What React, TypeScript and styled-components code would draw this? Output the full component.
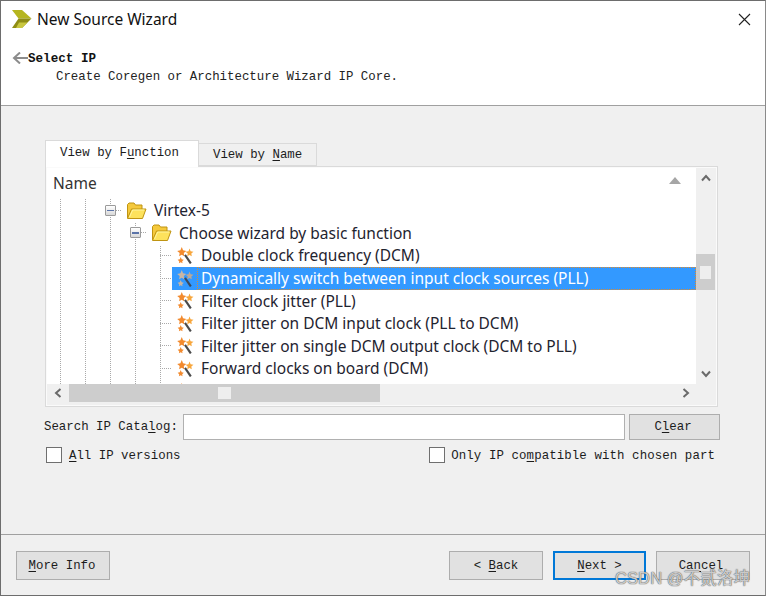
import React from "react";
import styled, { createGlobalStyle } from "styled-components";

const Global = createGlobalStyle`
  html, body { margin: 0; padding: 0; background: #f0f0f0; }
  * { box-sizing: border-box; }
`;

const mono = `"Liberation Mono", "DejaVu Sans Mono", monospace`;
const sans = `"Noto Sans", "Open Sans", sans-serif`;

const Window = styled.div`
  position: relative;
  width: 766px;
  height: 596px;
  display: flex;
  flex-direction: column;
  background: #f0f0f0;
  border: 1px solid #6d6d6d;
  border-right-color: #8a8a8a;
  overflow: hidden;
  font-family: ${mono};
  font-size: 12.4px;
  color: #1c1c1c;
`;

const Header = styled.header`
  height: 105px;
  flex: none;
  background: #fff;
  border-bottom: 1px solid #a0a0a0;
`;

const TitleBar = styled.div`
  height: 37px;
  display: flex;
  align-items: center;
  padding: 0 14px 1px 10px;
  gap: 5px;
`;

const Title = styled.div`
  flex: 1;
  font-family: ${sans};
  font-size: 15.5px;
  color: #111;
`;

const HeaderBody = styled.div`
  display: flex;
  padding: 14px 0 0 11px;
`;

const HeaderText = styled.div`
  display: flex;
  flex-direction: column;
  line-height: 18px;
  margin-top: -2px;
`;

const Heading = styled.div`
  font-weight: 700;
  font-size: 12.6px;
  color: #111;
`;

const SubHeading = styled.div`
  padding-left: 28px;
  color: #222;
`;

const Body = styled.main`
  flex: 1;
  padding: 34px 45px 0 43px;
  display: flex;
  flex-direction: column;
`;

const TabRow = styled.div`
  display: flex;
  align-items: flex-end;
  height: 26px;
  margin-left: 1px;
  position: relative;
  z-index: 1;
`;

const Tab = styled.div<{ $active?: boolean }>`
  height: ${(p) => (p.$active ? "27px" : "23px")};
  width: ${(p) => (p.$active ? "154px" : "118px")};
  margin-bottom: ${(p) => (p.$active ? "-1px" : "0")};
  padding: ${(p) => (p.$active ? "5px 0 0 14px" : "4px 0 0 14px")};
  background: ${(p) => (p.$active ? "#fff" : "#f0f0f0")};
  border: 1px solid #dadada;
  border-bottom: ${(p) => (p.$active ? "none" : "1px solid #dadada")};
  border-left-width: ${(p) => (p.$active ? "1px" : "0")};
  white-space: nowrap;
`;

const Panel = styled.section`
  margin-left: 1px;
  width: 673px;
  height: 241px;
  border: 1px solid #dadada;
  box-shadow: inset 0 0 0 1px #fafafa;
  padding: 1px 2px 2px 1px;
  display: grid;
  grid-template-columns: 1fr 19px;
  grid-template-rows: 1fr 20px;
`;

const TreePane = styled.div`
  background: #fff;
  overflow: hidden;
  font-family: ${sans};
  font-size: 15.5px;
  color: #1f2430;
`;

const ColumnHeader = styled.div`
  height: 31px;
  display: flex;
  align-items: flex-start;
  justify-content: space-between;
  padding: 4px 15px 0 6px;
  line-height: 22px;
  color: #333;
`;

const dots = (x: number, y: number) =>
  `repeating-linear-gradient(to bottom, #a9a9a9 0 1px, transparent 1px 2px) ${x}px ${y}px / 1px 100% no-repeat`;

const Tree = styled.div`
  height: 187px;
  overflow: hidden;
  background: ${dots(13, 0)}, ${dots(38, 0)}, ${dots(63, 0)}, ${dots(88, 24)}, ${dots(113, 47)};
`;

const Row = styled.div<{ $indent: number }>`
  height: 22.6px;
  display: flex;
  align-items: center;
  padding-left: ${(p) => p.$indent}px;
  white-space: nowrap;
`;

const Dash = styled.span<{ $w: number }>`
  flex: none;
  width: ${(p) => p.$w}px;
  height: 1px;
  background: repeating-linear-gradient(to right, #a9a9a9 0 1px, transparent 1px 2px);
`;

const Toggle = styled.span`
  flex: none;
  width: 11px;
  height: 11px;
  display: flex;
  align-items: center;
  justify-content: center;
  border: 1px solid #9a9a9a;
  border-radius: 1px;
  background: linear-gradient(#fff, #d8d8d8);
  &::before {
    content: "";
    width: 7px;
    height: 1.5px;
    background: #5b74a8;
  }
`;

const NodeLabel = styled.span`
  margin-left: 7px;
`;

const Leaf = styled.div<{ $selected?: boolean }>`
  flex: 1;
  height: ${(p) => (p.$selected ? "23px" : "auto")};
  display: flex;
  align-items: center;
  padding-left: 5px;
  background: ${(p) => (p.$selected ? "#3399ff" : "transparent")};
  color: ${(p) => (p.$selected ? "#fff" : "inherit")};
`;

const LeafLabel = styled.span<{ $selected?: boolean }>`
  flex: 1;
  align-self: stretch;
  display: flex;
  align-items: center;
  margin-left: 3px;
  padding-left: 4px;
  outline: ${(p) => (p.$selected ? "1px dotted #e08a2c" : "none")};
  outline-offset: -1px;
`;

const VScroll = styled.div`
  display: flex;
  flex-direction: column;
  align-items: center;
`;

const ArrowSlot = styled.div`
  height: 20px;
  width: 100%;
  display: flex;
  align-items: center;
  justify-content: center;
  flex: none;
`;

const VTrack = styled.div`
  flex: 1;
  width: 100%;
  padding-top: 66px;
`;

const VThumb = styled.div`
  height: 36px;
  background: #cdcdcd;
  display: flex;
  align-items: center;
  justify-content: center;
  &::before {
    content: "";
    width: 11px;
    height: 13px;
    background: #eee;
  }
`;

const HScroll = styled.div`
  display: flex;
  align-items: stretch;
  height: 18px;
`;

const HThumb = styled.div`
  width: 311px;
  background: #cdcdcd;
  display: flex;
  align-items: center;
  justify-content: center;
  &::before {
    content: "";
    width: 13px;
    height: 12px;
    background: #eee;
  }
`;

const HSpacer = styled.div`
  flex: 1;
`;

const HArrow = styled.div<{ $w: number }>`
  width: ${(p) => p.$w}px;
  display: flex;
  align-items: center;
  justify-content: center;
  flex: none;
`;

const Corner = styled.div``;

const SearchRow = styled.div`
  display: flex;
  align-items: center;
  height: 26px;
  margin-top: 7px;
  width: 676px;
`;

const SearchLabel = styled.label`
  width: 139px;
  flex: none;
  white-space: nowrap;
`;

const SearchInput = styled.input`
  flex: 1;
  height: 26px;
  border: 1px solid #b0b0b0;
  background: #fff;
  outline: none;
  min-width: 0;
`;

const Button = styled.button<{ $w: number; $primary?: boolean; $nudge?: number }>`
  flex: none;
  width: ${(p) => p.$w}px;
  height: ${(p) => (p.$primary ? "29px" : "auto")};
  padding: 0 ${(p) => p.$nudge ?? 0}px 0 0;
  background: #e1e1e1;
  border: ${(p) => (p.$primary ? "2px solid #0078d7" : "1px solid #adadad")};
  font-family: ${mono};
  font-size: 12.4px;
  color: #1c1c1c;
  white-space: pre;
`;

const ClearButton = styled(Button)`
  height: 26px;
  margin-left: 4px;
`;

const OptionRow = styled.div`
  display: flex;
  justify-content: space-between;
  align-items: center;
  height: 16px;
  margin-top: 7px;
  width: 676px;
  padding: 0 5px 0 2px;
`;

const Option = styled.label<{ $spread?: boolean }>`
  display: flex;
  align-items: center;
  white-space: nowrap;
  letter-spacing: ${(p) => (p.$spread ? "0.1px" : "0")};
`;

const OptionText = styled.span`
  padding-top: 2px;
`;

const Check = styled.span<{ $gap: number }>`
  flex: none;
  width: 16px;
  height: 16px;
  margin-right: ${(p) => p.$gap}px;
  background: #fff;
  border: 1px solid #6f6f6f;
`;

const Footer = styled.footer`
  position: relative;
  flex: none;
  height: 61px;
  border-top: 1px solid #a0a0a0;
  padding: 16px 15px 0 15px;
  display: flex;
  justify-content: space-between;
  align-items: flex-start;
`;

const FooterGroup = styled.div`
  display: flex;
  height: 29px;
  gap: 10px;
`;

const Mnemonic = styled.span`
  text-decoration: underline;
  text-underline-offset: 2px;
`;

const Watermark = styled.div`
  position: absolute;
  left: 614px;
  top: 30px;
  font-family: "Liberation Sans", "Noto Sans CJK SC", sans-serif;
  font-size: 16.5px;
  letter-spacing: 0.1px;
  color: rgba(255, 255, 255, 0.7);
  text-shadow: 0 0 1px #555, 0 0 1px #555;
  white-space: nowrap;
`;

const Logo = () => (
  <svg width="21" height="19" viewBox="0 0 21 19" style={{ flex: "none" }}>
    <path d="M1 0h10l9.500 8.500H7.500z" fill="#b5b51f" />
    <path d="M7.500 8.500h13L11 18H1z" fill="#8f8d14" />
    <path d="M8 12.500h8.500L11 18H5z" fill="#c9c73f" />
  </svg>
);

const Close = () => (
  <svg width="13" height="13" viewBox="0 0 13 13">
    <path d="M1 1l11 11M12 1L1 12" stroke="#222" strokeWidth="1.1" fill="none" />
  </svg>
);

const BackArrow = () => (
  <svg width="16" height="12" viewBox="0 1 16 12" style={{ flex: "none" }}>
    <path d="M16 7H3M8 1.500L2 7l6 5.500" stroke="#8c8c8c" strokeWidth="2" fill="none" />
  </svg>
);

const Folder = () => (
  <svg width="21" height="19" viewBox="0 0 21 19" style={{ flex: "none", marginLeft: 4 }}>
    <path d="M1.500 17V3.500L3 2h5l1.500 2H16v4" fill="#f5c93c" stroke="#bf9412" strokeWidth="1" />
    <path d="M1.500 17.500L5.500 8h14.500l-3.500 9.500z" fill="#fde25c" stroke="#bf9412" strokeWidth="1" strokeLinejoin="round" />
    <path d="M3.500 16l3.200-7h11.500" fill="none" stroke="#fff4a0" strokeWidth="1" />
  </svg>
);

const Wand = ({ selected }: { selected?: boolean }) => {
  const a = selected ? "#c9b6a4" : "#f28a2e";
  const b = selected ? "#b9a89a" : "#f7a63c";
  return (
    <svg width="17" height="17" viewBox="0 0 16 16" style={{ flex: "none" }}>
      <path d="M4.500 0l1.200 3 3 .7-2.300 2 .4 3L4.500 7.200 2 8.700l.5-3L.2 3.700l3-.7z" fill={a} />
      <path d="M11.800 1.500l1 2.400 2.700.5-2 1.800.4 2.600-2.100-1.300-2.200 1.300.5-2.600-2-1.800 2.700-.5z" fill={b} />
      <path d="M3.500 9.500l.9 2 2 .4-1.500 1.400.3 2.100-1.700-1-1.700 1 .3-2.100L.6 11.900l2-.4z" fill={a} />
      <path d="M7.500 7.500L13 15.500" stroke={selected ? "#3d4a5c" : "#4a4a4a"} strokeWidth="2" />
    </svg>
  );
};

const Chevron = ({ dir }: { dir: "up" | "down" | "left" | "right" }) => {
  const rot = { up: 0, right: 90, down: 180, left: 270 }[dir];
  return (
    <svg width="10" height="8" viewBox="0 0 10 8" style={{ transform: `rotate(${rot}deg)` }}>
      <path d="M1 6.500L5 2l4 4.500" stroke="#6a6a6a" strokeWidth="2" fill="none" />
    </svg>
  );
};

const SortArrow = () => (
  <svg width="12" height="7" viewBox="0 0 12 7" style={{ marginTop: 5 }}>
    <path d="M6 0l6 7H0z" fill="#a6a6a6" />
  </svg>
);

const leaves = [
  "Double clock frequency (DCM)",
  "Dynamically switch between input clock sources (PLL)",
  "Filter clock jitter (PLL)",
  "Filter jitter on DCM input clock (PLL to DCM)",
  "Filter jitter on single DCM output clock (DCM to PLL)",
  "Forward clocks on board (DCM)",
  "",
];

export default function App() {
  return (
    <>
      <Global />
      <Window>
        <Header>
          <TitleBar>
            <Logo />
            <Title>New Source Wizard</Title>
            <Close />
          </TitleBar>
          <HeaderBody>
            <BackArrow />
            <HeaderText>
              <Heading>Select IP</Heading>
              <SubHeading>Create Coregen or Architecture Wizard IP Core.</SubHeading>
            </HeaderText>
          </HeaderBody>
        </Header>

        <Body>
          <TabRow>
            <Tab $active>
              View by F<Mnemonic>u</Mnemonic>nction
            </Tab>
            <Tab>
              View by <Mnemonic>N</Mnemonic>ame
            </Tab>
          </TabRow>
          <Panel>
            <TreePane>
              <ColumnHeader>
                <span>Name</span>
                <SortArrow />
              </ColumnHeader>
              <Tree>
                <Row $indent={58}>
                  <Toggle />
                  <Dash $w={6} />
                  <Folder />
                  <NodeLabel>Virtex-5</NodeLabel>
                </Row>
                <Row $indent={83}>
                  <Toggle />
                  <Dash $w={6} />
                  <Folder />
                  <NodeLabel>Choose wizard by basic function</NodeLabel>
                </Row>
                {leaves.map((text, i) => (
                  <Row $indent={113} key={i}>
                    <Dash $w={12} />
                    <Leaf $selected={i === 1}>
                      <Wand selected={i === 1} />
                      <LeafLabel $selected={i === 1}>{text}</LeafLabel>
                    </Leaf>
                  </Row>
                ))}
              </Tree>
            </TreePane>
            <VScroll>
              <ArrowSlot>
                <Chevron dir="up" />
              </ArrowSlot>
              <VTrack>
                <VThumb />
              </VTrack>
              <ArrowSlot>
                <Chevron dir="down" />
              </ArrowSlot>
            </VScroll>
            <HScroll>
              <HArrow $w={22}>
                <Chevron dir="left" />
              </HArrow>
              <HThumb />
              <HSpacer />
              <HArrow $w={20}>
                <Chevron dir="right" />
              </HArrow>
            </HScroll>
            <Corner />
          </Panel>

          <SearchRow>
            <SearchLabel>
              Search IP Cata<Mnemonic>l</Mnemonic>og:
            </SearchLabel>
            <SearchInput />
            <ClearButton $w={91} $nudge={3}>
              C<Mnemonic>l</Mnemonic>ear
            </ClearButton>
          </SearchRow>

          <OptionRow>
            <Option>
              <Check $gap={7} />
              <OptionText>
                <Mnemonic>A</Mnemonic>ll IP versions
              </OptionText>
            </Option>
            <Option $spread>
              <Check $gap={6} />
              <OptionText>
                Only IP co<Mnemonic>m</Mnemonic>patible with chosen part
              </OptionText>
            </Option>
          </OptionRow>
        </Body>

        <Footer>
          <FooterGroup>
            <Button $w={94} $nudge={2}>
              <Mnemonic>M</Mnemonic>ore Info
            </Button>
          </FooterGroup>
          <FooterGroup>
            <Button $w={94}>
              {"< "}
              <Mnemonic>B</Mnemonic>ack
            </Button>
            <Button $w={93} $primary>
              <Mnemonic>N</Mnemonic>ext{" >"}
            </Button>
            <Button $w={94} $nudge={4}>
              Ca<Mnemonic>n</Mnemonic>cel
            </Button>
          </FooterGroup>
          <Watermark>CSDN @不贰洛坤</Watermark>
        </Footer>
      </Window>
    </>
  );
}
